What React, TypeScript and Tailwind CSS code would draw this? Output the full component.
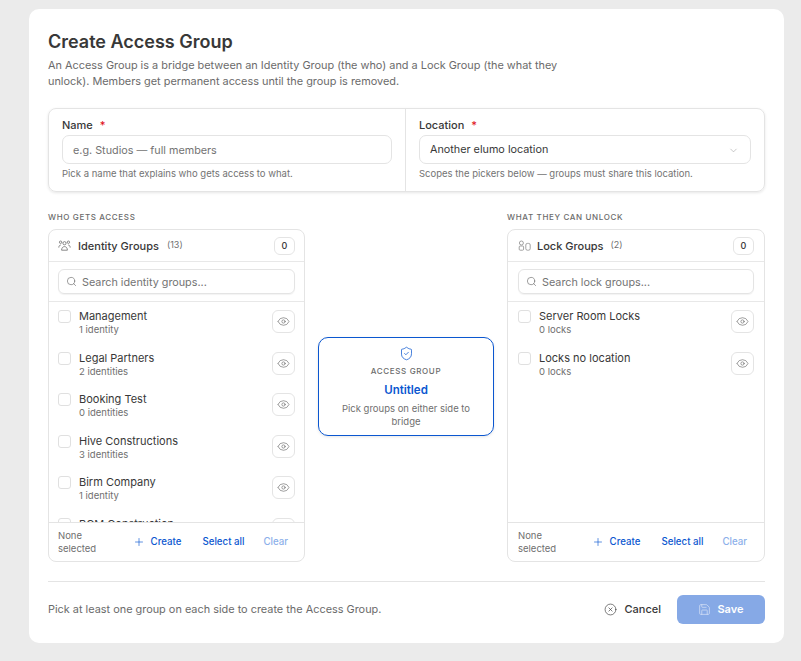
import { ChevronDown, CircleX, Eye, Plus, Save, Search, ShieldCheck } from "lucide-react";

const identities = [
  ["Management", "1 identity"],
  ["Legal Partners", "2 identities"],
  ["Booking Test", "0 identities"],
  ["Hive Constructions", "3 identities"],
  ["Birm Company", "1 identity"],
  ["BCM Construction", ""],
];
const locks = [
  ["Server Room Locks", "0 locks"],
  ["Locks no location", "0 locks"],
];

function PeopleIcon() {
  return (
    <svg width="13" height="13" viewBox="0 0 13 13" fill="none" stroke="#7a7a7a" strokeWidth="0.9" className="shrink-0">
      <circle cx="6.5" cy="4.2" r="1.6" />
      <circle cx="2.6" cy="3.2" r="1.2" />
      <circle cx="10.4" cy="3.2" r="1.2" />
      <path d="M3.6 11.2c0-2.2 1.2-3.6 2.9-3.6s2.9 1.4 2.9 3.6z" />
      <path d="M0.8 8.6c0-1.5.8-2.6 2-2.6M12.2 8.6c0-1.5-.8-2.6-2-2.6" />
    </svg>
  );
}

function LocksIcon() {
  return (
    <svg width="13" height="11" viewBox="0 0 13 11" fill="none" stroke="#8a8a8a" strokeWidth="0.8" className="shrink-0">
      <circle cx="3.4" cy="3" r="2" />
      <rect x="1.2" y="6" width="4.4" height="4.2" rx="1" />
      <rect x="7.8" y="3.4" width="4.4" height="6.8" rx="1.6" />
    </svg>
  );
}

function Panel({
  label,
  title,
  count,
  placeholder,
  rows,
  icon,
  gap,
  pad,
  foot,
}: {
  label: string;
  title: string;
  count: string;
  placeholder: string;
  rows: string[][];
  icon: React.ReactNode;
  gap: string;
  pad: string;
  foot: string;
}) {
  return (
    <div className="flex flex-col min-w-0">
      <div className="h-[20px] text-[8px] leading-[16px] font-medium tracking-[0.08em] text-[#6b6b6b]">{label}</div>
      <div className="h-[333px] flex flex-col rounded-[8px] border border-[#e4e4e4] bg-white overflow-hidden">
        <div className={`h-[32px] shrink-0 flex items-center border-b border-[#e8e8e8] ${pad} ${gap}`}>
          {icon}
          <span className="mt-[2px] text-[11px] font-medium text-[#383838]">{title}</span>
          <span className="ml-[1px] text-[9px] text-[#6f6f6f] -mt-[2px]">{count}</span>
          <span className="ml-auto w-[21px] h-[18px] rounded-[6px] border border-[#e4e4e4] flex items-center justify-center text-[9px] font-medium text-[#333]">0</span>
        </div>
        <div className={`h-[40px] shrink-0 flex items-center border-b border-[#e8e8e8] ${pad}`}>
          <div className="w-full h-[25px] rounded-[6px] border border-[#e4e4e4] shadow-[0_1px_1px_rgba(0,0,0,0.05)] flex items-center gap-[5px] pl-[7px]">
            <Search size={11} strokeWidth={1.4} className="text-[#6b6b6b]" />
            <span className="pt-[3px] text-[10.8px] text-[#737373]">{placeholder}</span>
          </div>
        </div>
        <div className={`flex-1 min-h-0 overflow-hidden pt-[8px] ${pad}`}>
          {rows.map(([name, sub]) => (
            <div key={name} className="h-[41.5px] shrink-0 flex items-start">
              <span className="w-[13px] h-[13px] rounded-[3px] border border-[#e0e0e0] shrink-0" />
              <div className="ml-[8px] flex-1 min-w-0">
                <div className="text-[11px] leading-[13px] text-[#383838]">{name}</div>
                {sub ? <div className="text-[9.5px] leading-[13px] text-[#6f6f6f]">{sub}</div> : null}
              </div>
              <span className="w-[23px] h-[23px] rounded-[6px] border border-[#e4e4e4] flex items-center justify-center shrink-0">
                <Eye size={13} strokeWidth={1.2} className="text-[#6b6b6b]" />
              </span>
            </div>
          ))}
        </div>
        <div className={`h-[39px] shrink-0 border-t border-[#e4e4e4] flex items-center text-[9.7px] ${foot}`}>
          <span className="leading-[13px] w-[48px] text-[9.5px] text-[#6f6f6f]">None<br />selected</span>
          <span className="ml-auto flex items-center font-medium text-[#0b57d0]">
            <Plus size={12} strokeWidth={1.3} className="mr-[6px]" />Create
          </span>
          <span className="ml-[21px] font-medium text-[#0b57d0]">Select all</span>
          <span className="ml-[19px] font-medium text-[#8cb0ea]">Clear</span>
        </div>
      </div>
    </div>
  );
}

export default function App() {
  return (
    <div className="w-[801px] h-[661px] bg-[#ebebeb] pt-[9px] pl-[29px] overflow-hidden font-['Inter',sans-serif]">
      <div className="w-[755px] h-[634px] bg-white rounded-[10px] px-[19px] pt-[21px]">
        <h1 className="text-[18px] leading-[24px] font-semibold text-[#383838]">Create Access Group</h1>
        <p className="mt-[3px] w-[520px] text-[10.9px] leading-[16px] text-[#6b6b6b]">
          An Access Group is a bridge between an Identity Group (the who) and a Lock Group (the what they unlock). Members get permanent access until the group is removed.
        </p>
        <div className="mt-[19px] h-[84px] w-[717px] grid grid-cols-[357px_360px] rounded-[8px] border border-[#e4e4e4] shadow-[0_1px_3px_rgba(0,0,0,0.1)]">
          <div className="pl-[13px] pr-[13px] pt-[9px] border-r border-[#e4e4e4]">
            <div className="h-[15px] text-[11px] leading-[15px] font-medium text-[#383838]">Name<span className="ml-[7px] text-[#e0101a]">*</span></div>
            <div className="mt-[2px] h-[29px] rounded-[7px] border border-[#e4e4e4] flex items-center pl-[10px] pt-[3px] text-[10.8px] text-[#737373]">e.g. Studios — full members</div>
            <div className="mt-[3px] text-[9.5px] leading-[13px] text-[#737373]">Pick a name that explains who gets access to what.</div>
          </div>
          <div className="pl-[13px] pr-[13px] pt-[9px]">
            <div className="h-[15px] text-[11px] leading-[15px] font-medium text-[#383838]">Location<span className="ml-[7px] text-[#e0101a]">*</span></div>
            <div className="mt-[2px] h-[29px] w-[332px] rounded-[7px] border border-[#e4e4e4] flex items-center justify-between pl-[10px] pr-[11px] pt-[2px] text-[10.8px] text-[#383838]">
              Another elumo location
              <ChevronDown size={11} strokeWidth={1.2} className="text-[#9a9a9a]" />
            </div>
            <div className="mt-[3px] text-[9.5px] leading-[13px] text-[#737373]">Scopes the pickers below — groups must share this location.</div>
          </div>
        </div>
        <div className="mt-[17px] w-[717px] grid grid-cols-[257px_176px_258px] gap-x-[13px]">
          <Panel label="WHO GETS ACCESS" title="Identity Groups" count="(13)" placeholder="Search identity groups..." rows={identities} icon={<PeopleIcon />} gap="gap-[7px]" pad="pl-[9px] pr-[9px]" foot="pl-[9px] pr-[16px]" />
          <div className="flex items-start pt-[128px]">
            <div className="w-full h-[99px] rounded-[10px] border border-[#0b57d0] shadow-[0_1px_3px_rgba(0,0,0,0.1)] flex flex-col items-center pt-[8px] text-center">
              <ShieldCheck size={15} strokeWidth={1.2} className="text-[#0b57d0]" />
              <div className="mt-[4px] text-[8px] leading-[12px] tracking-[0.08em] font-medium text-[#6b6b6b]">ACCESS GROUP</div>
              <div className="mt-[6px] text-[11.5px] leading-[14px] font-semibold text-[#0b57d0]">Untitled</div>
              <div className="mt-[5px] px-[8px] w-[166px] text-[9.5px] leading-[13px] text-[#6f6f6f]">Pick groups on either side to bridge</div>
            </div>
          </div>
          <Panel label="WHAT THEY CAN UNLOCK" title="Lock Groups" count="(2)" placeholder="Search lock groups..." rows={locks} icon={<LocksIcon />} gap="gap-[6px]" pad="pl-[10px] pr-[10px]" foot="pl-[10px] pr-[17px]" />
        </div>
        <div className="mt-[19px] w-[717px] border-t border-[#e4e4e4] flex items-center justify-between pt-[13px]">
          <span className="text-[10.9px] text-[#6b6b6b]">Pick at least one group on each side to create the Access Group.</span>
          <div className="flex items-center">
            <span className="flex items-center gap-[7px] text-[11px] font-medium text-[#383838]">
              <CircleX size={13} strokeWidth={1.2} />Cancel
            </span>
            <span className="ml-[16px] w-[88px] h-[29px] rounded-[6px] bg-[#86a9e6] flex items-center justify-center gap-[6px] text-[11px] font-semibold text-white">
              <Save size={13} strokeWidth={1.2} className="text-[#dfe8f9]" />Save
            </span>
          </div>
        </div>
      </div>
    </div>
  );
}
